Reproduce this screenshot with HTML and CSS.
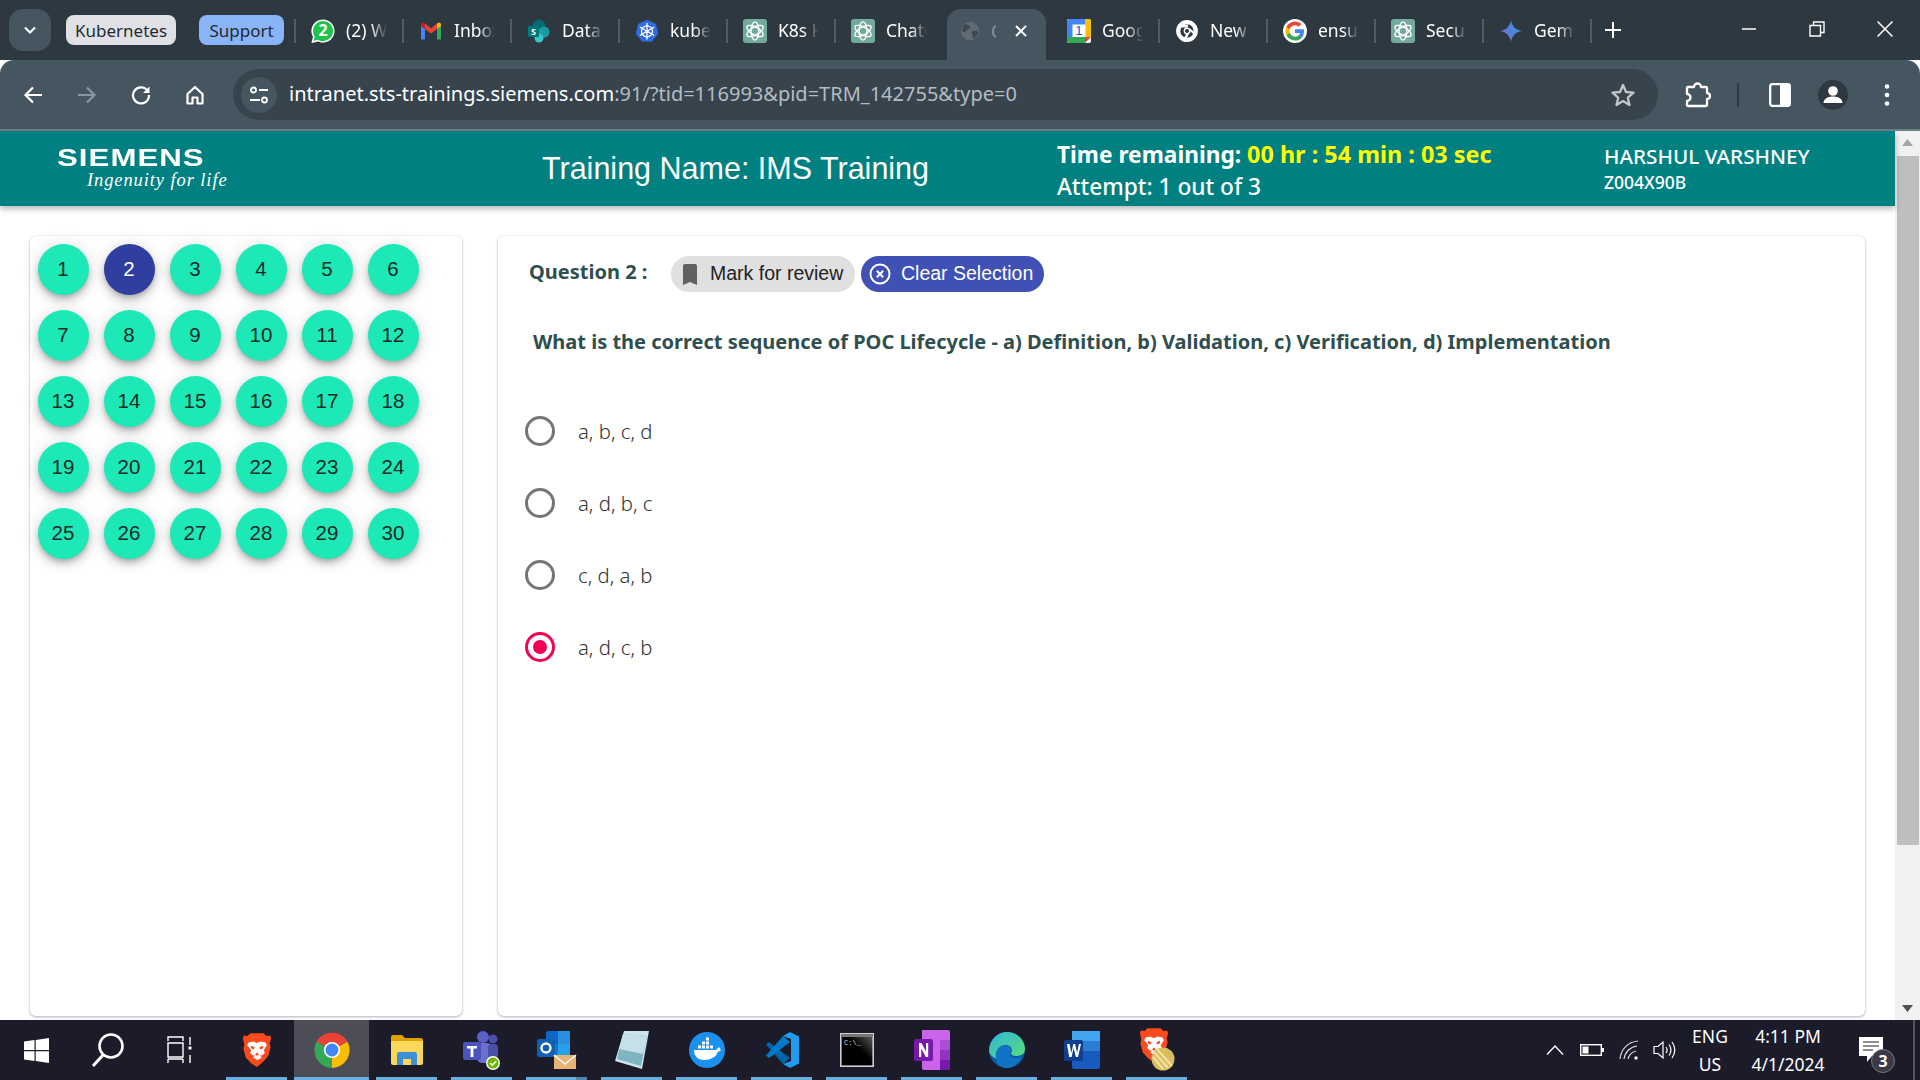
FILE: index.html
```html
<!DOCTYPE html>
<html lang="en">
<head>
<meta charset="utf-8">
<title>IMS Training</title>
<link rel="stylesheet" href="styles.css">
</head>
<body>
<svg class="defs" width="0" height="0" aria-hidden="true">
  <defs>
    <linearGradient id="gem" x1="0" y1="1" x2="1" y2="0"><stop offset="0" stop-color="#9b72cb"/><stop offset=".5" stop-color="#4f7fdc"/><stop offset="1" stop-color="#3aa0e8"/></linearGradient>
    <linearGradient id="edgeA" x1="0" y1="0" x2="1" y2="1"><stop offset="0" stop-color="#2fb7d8"/><stop offset="1" stop-color="#5bdc78"/></linearGradient>
    <linearGradient id="cmdG" x1="0" y1="1" x2="1" y2="0"><stop offset=".55" stop-color="#000"/><stop offset="1" stop-color="#666"/></linearGradient>
    <symbol id="gpt" viewBox="0 0 24 24">
      <rect width="24" height="24" rx="3" fill="#74aa9c"/>
      <g fill="none" stroke="#fff" stroke-width="1.300">
        <ellipse cx="12" cy="12" rx="3.900" ry="9.200"/>
        <ellipse cx="12" cy="12" rx="3.900" ry="9.200" transform="rotate(60 12 12)"/>
        <ellipse cx="12" cy="12" rx="3.900" ry="9.200" transform="rotate(120 12 12)"/>
      </g>
    </symbol>
    <symbol id="brave" viewBox="0 0 32 38">
      <path fill="#fb4a1c" d="M9 1h14l3 3 4-.5 1 3-1.500 5.500 1 4-2.500 9.500-6 6.500L16 37l-6-3.500L4 27 1.500 17.500l1-4.500L1 6.500l1-3 4 .5z"/>
      <path fill="#fff" d="M7 11l5-1 4 1.500 4-1.500 5 1 1.500 3-3.500 5.500 1.500 2.500-3.500 3-2-.8 2 3-4.500 2.500-4.500-2.500 2-3-2 .8-3.500-3 1.500-2.500L5.500 14z"/>
      <path fill="#fb4a1c" d="M9.500 14.500l4 1.500-1 2.500-3-1.500zM22.500 14.500l-4 1.500 1 2.500 3-1.500zM14 24l2 1.200 2-1.200-2-2.500z"/>
    </symbol>
  </defs>
</svg>

<div class="tabstrip">
  <div class="tab-search"><svg width="14" height="14" viewBox="0 0 14 14"><path d="M2 4.500l5 5 5-5" fill="none" stroke="#fff" stroke-width="2"/></svg></div>
  <div class="pill pill-grey">Kubernetes</div>
  <div class="pill pill-blue">Support</div>

  <div class="tab">
    <svg class="fav" viewBox="0 0 24 24"><path d="M12 1.200a10.800 10.800 0 0 0-9.200 16.400L1.500 23l5.500-1.400A10.800 10.800 0 1 0 12 1.200z" fill="#1fc24a" stroke="#fff" stroke-width="1.600"/><text x="12" y="17" class="wa-num">2</text></svg>
    <span class="tab-label">(2) WhatsApp</span>
  </div>
  <div class="tab">
    <svg class="fav" viewBox="0 0 24 24"><path fill="#4285f4" d="M2 20.500h4V10L2 7z"/><path fill="#34a853" d="M18 20.500h4V7l-4 3z"/><path fill="#ea4335" d="M6 10l6 4.500 6-4.500V4.500l-6 4.700-6-4.700z"/><path fill="#fbbc04" d="M18 4.500V10l4-3V5.500c0-2-2.500-2.500-4-1z"/><path fill="#c5221f" d="M2 7l4 3V4.500c-1.500-1.500-4-1-4 1z"/></svg>
    <span class="tab-label">Inbox (3)</span>
  </div>
  <div class="tab">
    <svg class="fav" viewBox="0 0 24 24"><circle cx="12" cy="7" r="6.500" fill="#036c70"/><circle cx="17" cy="13" r="5.500" fill="#1a9ba1"/><circle cx="12" cy="19" r="4.500" fill="#37c6d0"/><rect x="1" y="7" width="11" height="11" rx="1" fill="#03787c"/><text x="6.500" y="15.500" class="sp-s">S</text></svg>
    <span class="tab-label">Data Sheet</span>
  </div>
  <div class="tab">
    <svg class="fav" viewBox="0 0 24 24"><path fill="#326ce5" d="M12 .8l9 4.300 2.200 9.700-6.200 7.800H7L.8 14.800 3 5.100z"/><g fill="none" stroke="#fff" stroke-width="1.300"><circle cx="12" cy="12.300" r="5.500"/><path d="M12 4v16.500M4.800 8l14.400 8.500M19.200 8L4.800 16.500"/></g><circle cx="12" cy="12.300" r="1.600" fill="#fff"/></svg>
    <span class="tab-label">kubernetes</span>
  </div>
  <div class="tab"><svg class="fav"><use href="#gpt"/></svg><span class="tab-label">K8s Help</span></div>
  <div class="tab"><svg class="fav"><use href="#gpt"/></svg><span class="tab-label">ChatGPT</span></div>
  <div class="tab tab-active">
    <svg class="fav fav-globe" viewBox="0 0 24 24"><circle cx="12" cy="12" r="11" fill="#5f6a72"/><path fill="#3d4951" d="M6 3.500c3 1 5 1 6 3s-3 3-4 5-4 2-5 1 0-7 3-9zM15 12c3-1 6 0 7 1-.5 4-3 7-6 8-2-2 0-3-1-5s-2-3 0-4z"/></svg>
    <span class="tab-label tab-label-short">O</span>
    <svg class="tab-x" width="14" height="14" viewBox="0 0 14 14"><path d="M2 2l10 10M12 2L2 12" stroke="#fff" stroke-width="2"/></svg>
  </div>
  <div class="tab tab-after">
    <svg class="fav" viewBox="0 0 24 24"><rect width="24" height="24" rx="2" fill="#fff"/><path fill="#4285f4" d="M0 2.500A2.500 2.500 0 0 1 2.500 0H18v5.500H5.500V18H0z"/><path fill="#fbbc04" d="M18 0h3.500A2.500 2.500 0 0 1 24 2.500V18h-5.500V5.500H18z"/><path fill="#34a853" d="M0 18h18v6H2.500A2.500 2.500 0 0 1 0 21.500z"/><path fill="#ea4335" d="M18 18h6l-6 6z"/><text x="11.800" y="16" class="cal-num">1</text></svg>
    <span class="tab-label">Google Calendar</span>
  </div>
  <div class="tab">
    <svg class="fav" viewBox="0 0 24 24"><circle cx="12" cy="12" r="8.800" fill="none" stroke="#fff" stroke-width="4.200"/><path fill="#fff" d="M3 5.500h10v3H5zM14 14.500l-3.500 8.500-3-.8 4-8zM15 9.500l6 4.500-.8 3-6.200-6z"/><circle cx="12" cy="12" r="3.400" fill="#fff"/><circle cx="12" cy="12" r="2" fill="#2d3840"/></svg>
    <span class="tab-label">New Tab</span>
  </div>
  <div class="tab">
    <svg class="fav" viewBox="0 0 24 24"><circle cx="12" cy="12" r="12" fill="#fff"/><path fill="#4285f4" d="M21 12.200c0-.7-.1-1.300-.2-1.900H12v3.600h5c-.2 1.200-.9 2.200-1.900 2.900v2.400h3.100c1.800-1.700 2.800-4.100 2.800-7z"/><path fill="#34a853" d="M12 21.500c2.600 0 4.700-.9 6.300-2.300l-3.100-2.400c-.9.600-2 .9-3.200.9-2.500 0-4.600-1.700-5.300-3.900H3.500v2.500c1.600 3.200 4.800 5.200 8.500 5.200z"/><path fill="#fbbc04" d="M6.700 13.800a5.700 5.700 0 0 1 0-3.600V7.700H3.500a9.500 9.500 0 0 0 0 8.600z"/><path fill="#ea4335" d="M12 6.300c1.400 0 2.600.5 3.600 1.400l2.700-2.700A9.500 9.500 0 0 0 3.500 7.700l3.200 2.500C7.400 8 9.500 6.300 12 6.300z"/></svg>
    <span class="tab-label">ensure</span>
  </div>
  <div class="tab"><svg class="fav"><use href="#gpt"/></svg><span class="tab-label">Security</span></div>
  <div class="tab">
    <svg class="fav" viewBox="0 0 24 24"><path fill="url(#gem)" d="M12 1c.8 6 4.500 10 11 11-6.500 1-10.200 5-11 11-.8-6-4.500-10-11-11 6.500-1 10.200-5 11-11z"/></svg>
    <span class="tab-label">Gemini</span>
  </div>
  <div class="tab-end"></div>
  <svg class="new-tab" width="16" height="16" viewBox="0 0 16 16"><path d="M8 0v16M0 8h16" stroke="#fff" stroke-width="2"/></svg>
  <div class="win-controls">
    <svg width="16" height="16" viewBox="0 0 16 16"><path d="M1 8h14" stroke="#fff" stroke-width="1.500"/></svg>
    <svg width="16" height="16" viewBox="0 0 16 16"><path d="M1 4.500h10.500V15H1zM4.500 4.500V1H15v10.500h-3.500" fill="none" stroke="#fff" stroke-width="1.400"/></svg>
    <svg width="16" height="16" viewBox="0 0 16 16"><path d="M.500.500l15 15M15.500.500l-15 15" stroke="#fff" stroke-width="1.500"/></svg>
  </div>
</div>

<div class="toolbar">
  <div class="nav-icons">
    <svg width="20" height="20" viewBox="0 0 20 20"><path d="M19 10H3M10 2.500L2.500 10l7.500 7.500" fill="none" stroke="#fff" stroke-width="2.200"/></svg>
    <svg width="20" height="20" viewBox="0 0 20 20"><path d="M1 10h16M10 2.500l7.500 7.500-7.500 7.500" fill="none" stroke="#8b97a0" stroke-width="2.200"/></svg>
    <svg width="20" height="20" viewBox="0 0 20 20"><path d="M17 6.500A8 8 0 1 0 18 10" fill="none" stroke="#fff" stroke-width="2.200"/><path d="M18.500 1.500V8H12z" fill="#fff"/></svg>
    <svg width="20" height="20" viewBox="0 0 20 20"><path d="M2.500 9L10 2l7.500 7v9.500H12.500v-6h-5v6h-5z" fill="none" stroke="#fff" stroke-width="2.200" stroke-linejoin="round"/></svg>
  </div>
  <div class="omnibox">
    <div class="site-info"><svg width="20" height="18" viewBox="0 0 20 18"><circle cx="4.500" cy="4" r="2.500" fill="none" stroke="#fff" stroke-width="1.800"/><path d="M10 4h9M1 14h10" stroke="#fff" stroke-width="2"/><circle cx="15.500" cy="14" r="2.500" fill="none" stroke="#fff" stroke-width="1.800"/></svg></div>
    <div class="url"><span class="url-host">intranet.sts-trainings.siemens.com</span><span class="url-rest">:91/?tid=116993&amp;pid=TRM_142755&amp;type=0</span></div>
    <svg class="star" width="26" height="26" viewBox="0 0 26 26"><path d="M13 3l3 7 7.500.7-5.700 5 1.700 7.300-6.500-3.900L6.500 23l1.700-7.300-5.700-5L10 10z" fill="none" stroke="#c4c7c9" stroke-width="2.300" stroke-linejoin="round"/></svg>
  </div>
  <div class="tool-icons">
    <svg class="ic-ext" width="26" height="28" viewBox="0 0 26 28"><path d="M3 6h6a3.500 3.500 0 0 1 7 0h5a1 1 0 0 1 1 1v5a3 3 0 0 1 0 6v6a1 1 0 0 1-1 1H3a1 1 0 0 1-1-1v-4a3.500 3.500 0 0 0 0-7V7a1 1 0 0 1 1-1z" fill="none" stroke="#fff" stroke-width="2.300" stroke-linejoin="round"/></svg>
    <span class="tool-sep"></span>
    <svg class="ic-panel" width="22" height="24" viewBox="0 0 22 24"><rect x="1.200" y="1.200" width="19.600" height="21.600" rx="2" fill="none" stroke="#fff" stroke-width="2.300"/><rect x="11" y="1.200" width="9.800" height="21.600" fill="#fff"/></svg>
    <svg class="ic-user" width="30" height="30" viewBox="0 0 30 30"><circle cx="15" cy="15" r="15" fill="#2d3840"/><circle cx="15" cy="11" r="4.800" fill="#fff"/><path d="M5.500 23c0-4.500 5-6.500 9.500-6.500s9.500 2 9.500 6.500z" fill="#fff"/></svg>
    <svg class="ic-menu" width="6" height="24" viewBox="0 0 6 24"><circle cx="3" cy="3.500" r="2.300" fill="#fff"/><circle cx="3" cy="12" r="2.300" fill="#fff"/><circle cx="3" cy="20.500" r="2.300" fill="#fff"/></svg>
  </div>
</div>
<div class="toolbar-line"></div>

<div class="viewport">
  <main class="page">
    <header class="app-header">
      <div class="logo">
        <div class="logo-word">SIEMENS</div>
        <div class="logo-tag">Ingenuity for life</div>
      </div>
      <div class="training">Training Name: IMS Training</div>
      <div class="timer">
        <div class="timer-line"><b>Time remaining:</b> <b class="timer-val">00 hr : 54 min : 03 sec</b></div>
        <div class="attempt">Attempt: 1 out of 3</div>
      </div>
      <div class="user">
        <div class="user-name">HARSHUL VARSHNEY</div>
        <div class="user-id">Z004X90B</div>
      </div>
    </header>

    <div class="content">
      <aside class="card nav-card">
        <div class="q-grid">
          <span class="q">1</span><span class="q q-current">2</span><span class="q">3</span><span class="q">4</span><span class="q">5</span><span class="q">6</span>
          <span class="q">7</span><span class="q">8</span><span class="q">9</span><span class="q">10</span><span class="q">11</span><span class="q">12</span>
          <span class="q">13</span><span class="q">14</span><span class="q">15</span><span class="q">16</span><span class="q">17</span><span class="q">18</span>
          <span class="q">19</span><span class="q">20</span><span class="q">21</span><span class="q">22</span><span class="q">23</span><span class="q">24</span>
          <span class="q">25</span><span class="q">26</span><span class="q">27</span><span class="q">28</span><span class="q">29</span><span class="q">30</span>
        </div>
      </aside>

      <section class="card question-card">
        <div class="q-head">
          <div class="q-title">Question 2 :</div>
          <div class="chip chip-grey">
            <svg width="16" height="21" viewBox="0 0 16 21"><path d="M1 2a2 2 0 0 1 2-2h10a2 2 0 0 1 2 2v19l-7-3-7 3z" fill="#616161"/></svg>
            <span class="chip-text">Mark for review</span>
          </div>
          <div class="chip chip-indigo">
            <svg width="22" height="22" viewBox="0 0 22 22"><circle cx="11" cy="11" r="9.500" fill="none" stroke="#fff" stroke-width="2"/><path d="M7.800 7.800l6.400 6.400M14.200 7.800l-6.400 6.400" stroke="#fff" stroke-width="2"/></svg>
            <span class="chip-text">Clear Selection</span>
          </div>
        </div>
        <div class="q-text">What is the correct sequence of POC Lifecycle - a) Definition, b) Validation, c) Verification, d) Implementation</div>
        <div class="options">
          <div class="option"><span class="radio"></span><span>a, b, c, d</span></div>
          <div class="option"><span class="radio"></span><span>a, d, b, c</span></div>
          <div class="option"><span class="radio"></span><span>c, d, a, b</span></div>
          <div class="option"><span class="radio radio-on"></span><span>a, d, c, b</span></div>
        </div>
      </section>
    </div>
  </main>
  <div class="scrollbar">
    <svg class="sb-arrow" width="11" height="7" viewBox="0 0 11 7"><path d="M5.500 0L11 7H0z" fill="#a3a3a3"/></svg>
    <div class="sb-thumb"></div>
    <svg class="sb-arrow sb-down" width="11" height="7" viewBox="0 0 11 7"><path d="M5.500 7L0 0h11z" fill="#505050"/></svg>
  </div>
</div>

<footer class="taskbar">
  <div class="tb-sys tb-win"><svg width="25" height="25" viewBox="0 0 25 25"><path fill="#fff" d="M0 3.600l10.500-1.500v9.900H0zM11.700 1.900L25 0v12H11.700zM0 13.200h10.500v9.900L0 21.600zM11.700 13.200H25V25l-13.300-1.900z"/></svg></div>
  <div class="tb-sys tb-search"><svg width="34" height="36" viewBox="0 0 34 36"><circle cx="20" cy="14" r="11.500" fill="none" stroke="#fff" stroke-width="2.600"/><path d="M12 23L2 34" stroke="#fff" stroke-width="3"/></svg></div>
  <div class="tb-sys tb-view"><svg width="26" height="28" viewBox="0 0 26 28"><path d="M1 5V1h15v4M1 23v4M16 23v4M1 23h15M1 7h15v14H1z" fill="none" stroke="#fff" stroke-width="1.400"/><path d="M23 1v8M23 19v8" stroke="#fff" stroke-width="1.400"/><rect x="21.500" y="10.500" width="3" height="3" fill="#fff"/></svg></div>

  <div class="tb-item"><svg width="30" height="36"><use href="#brave"/></svg></div>
  <div class="tb-item tb-active">
    <svg width="36" height="36" viewBox="0 0 24 24"><path fill="#ea4335" d="M12 12L1.600 6.500A12 12 0 0 1 22.400 6.500z"/><path fill="#fbbc04" d="M12 12L22.400 6.500A12 12 0 0 1 12 24z"/><path fill="#34a853" d="M12 12L12 24A12 12 0 0 1 1.600 6.500z"/><circle cx="12" cy="12" r="5.400" fill="#fff"/><circle cx="12" cy="12" r="4.300" fill="#4285f4"/></svg>
  </div>
  <div class="tb-item">
    <svg width="32" height="30" viewBox="0 0 32 30"><path d="M0 2a2 2 0 0 1 2-2h9l3 3h16a2 2 0 0 1 2 2v4H0z" fill="#e0a000"/><path d="M0 6h32v22a2 2 0 0 1-2 2H2a2 2 0 0 1-2-2z" fill="#fbd75b"/><path d="M6 30V19a2 2 0 0 1 2-2h16a2 2 0 0 1 2 2v11h-6v-6h-8v6z" fill="#3c8fd4"/></svg>
  </div>
  <div class="tb-item">
    <svg width="37" height="40" viewBox="0 0 37 40"><circle cx="20" cy="7" r="6" fill="#5b5fc7"/><circle cx="30" cy="9" r="4.500" fill="#4a4fa8"/><rect x="14" y="13" width="15" height="20" rx="5" fill="#6a6fd0"/><rect x="25" y="14" width="10" height="15" rx="4" fill="#4a4fa8"/><rect x="0" y="12" width="18" height="18" rx="2" fill="#4b53bc"/><path d="M4 16h10v2.500h-3.600V27H7.600v-8.500H4z" fill="#fff"/><circle cx="30" cy="33" r="7" fill="#fff"/><circle cx="30" cy="33" r="5.600" fill="#6bb700"/><path d="M27 33l2.200 2.200 4-4" stroke="#fff" stroke-width="1.600" fill="none"/></svg>
  </div>
  <div class="tb-item tb-double">
    <svg width="40" height="38" viewBox="0 0 40 38"><rect x="9" y="0" width="24" height="26" rx="2" fill="#1066c8"/><rect x="21" y="0" width="12" height="13" fill="#2a8fe0"/><rect x="9" y="13" width="12" height="13" fill="#0f78d4"/><rect x="21" y="13" width="12" height="13" fill="#27a0ea"/><rect x="0" y="8" width="18" height="18" rx="2" fill="#0f5fb5"/><circle cx="9" cy="17" r="4.500" fill="none" stroke="#fff" stroke-width="2.400"/><rect x="17" y="24" width="22" height="15" fill="#e8b476"/><path d="M17 24l11 9 11-9" fill="none" stroke="#fff" stroke-width="1.400"/></svg>
  </div>
  <div class="tb-item">
    <svg width="34" height="38" viewBox="0 0 34 38"><path d="M9 0h25l-7 38L0 30z" fill="#cfe5ec"/><path d="M8 3l24 2-6 30L2 28z" fill="#7fb4c2"/><path d="M8 3l24 2-4 18L4 18z" fill="#c5e0e6"/></svg>
  </div>
  <div class="tb-item">
    <svg width="36" height="36" viewBox="0 0 36 36"><circle cx="18" cy="18" r="18" fill="#1c90ed"/><path fill="#fff" d="M5 18h22c1 0 1.500-2.500 3-3 1 1 1 2 2 3-1 1-2 1.500-3 1.800C27 25 22 28 15 28 9 28 5 24 5 18z"/><path fill="#fff" d="M9 13.500h3v3H9zM13 13.500h3v3h-3zM17 13.500h3v3h-3zM13 9.500h3v3h-3zM17 9.500h3v3h-3zM17 5.500h3v3h-3zM21 13.500h3v3h-3z"/></svg>
  </div>
  <div class="tb-item">
    <svg width="36" height="36" viewBox="0 0 36 36"><path fill="#0065a9" d="M2 12.500L5 10l21 16-7 6z"/><path fill="#007acc" d="M2 23.500L5 26 26 10l-7-6z"/><path fill="#1f9cf0" d="M26 0l9 4.500v27L26 36l-7-4 8-3V7L19 4z"/></svg>
  </div>
  <div class="tb-item">
    <svg width="34" height="34" viewBox="0 0 34 34"><rect x=".8" y=".8" width="32.400" height="32.400" fill="url(#cmdG)" stroke="#cfcfcf" stroke-width="1.600"/><rect x="1" y="1" width="32" height="3" fill="#777"/><text x="4" y="12" class="cmd-text">C:\_</text></svg>
  </div>
  <div class="tb-item">
    <svg width="36" height="40" viewBox="0 0 36 40"><path d="M8 0h26a2 2 0 0 1 2 2v36a2 2 0 0 1-2 2H10a2 2 0 0 1-2-2z" fill="#ca64ea"/><rect x="26" y="10" width="10" height="10" fill="#ae4bd5"/><rect x="26" y="20" width="10" height="10" fill="#9332bf"/><path d="M26 30h10v8a2 2 0 0 1-2 2h-8z" fill="#7719aa"/><rect x="0" y="9" width="19" height="22" rx="2" fill="#7719aa"/><path d="M5 27V13h2.400l4.600 8.500V13h2.200v14h-2.300L7.200 18.500V27z" fill="#fff"/></svg>
  </div>
  <div class="tb-item">
    <svg width="36" height="36" viewBox="0 0 36 36"><circle cx="18" cy="18" r="18" fill="#0c59a4"/><path d="M0 18C1 7 9 0 18 0c10 0 18 8 18 17 0 5-4 7-9 7-3 0-5-1-5-3 2-2 1-8-5-8-8 0-11 7-9 14-5-2-8-5-8-9z" fill="url(#edgeA)"/><path d="M8 30c-4-8 1-17 8-17 6 0 7 6 5 8-1 3 2 5 6 5 3 0 5-1 6-3-2 8-9 13-15 13-4 0-8-2-10-6z" fill="#1173c4"/></svg>
  </div>
  <div class="tb-item">
    <svg width="36" height="38" viewBox="0 0 36 38"><path d="M8 0h26a2 2 0 0 1 2 2v34a2 2 0 0 1-2 2H10a2 2 0 0 1-2-2z" fill="#185abd"/><rect x="8" y="0" width="28" height="10" fill="#41a5ee"/><rect x="8" y="10" width="28" height="10" fill="#2b7cd3"/><rect x="0" y="9" width="19" height="21" rx="2" fill="#103f91"/><path d="M3 13h2.500l1.800 9 2-9h1.800l2 9 1.800-9H17l-3 13h-2.200L9.600 17l-2 9H5.200z" fill="#fff"/></svg>
  </div>
  <div class="tb-item">
    <svg width="36" height="46" viewBox="0 0 36 46"><use href="#brave" width="30" height="36" x="0" y="0"/><circle cx="24" cy="32" r="11.500" fill="#d9bd5e"/><path d="M15 25l14 16M18 22l15 17M14 30l10 12" stroke="#f1e3a6" stroke-width="2"/></svg>
  </div>

  <div class="tray">
    <svg class="tray-caret" width="18" height="10" viewBox="0 0 18 10"><path d="M1 9.500L9 1l8 8.500" fill="none" stroke="#fff" stroke-width="1.300"/></svg>
    <svg class="tray-bat" width="24" height="12" viewBox="0 0 24 12"><rect x=".7" y=".7" width="20.600" height="10.600" fill="none" stroke="#fff" stroke-width="1.400"/><rect x="2.500" y="2.500" width="6" height="7" fill="#fff"/><rect x="22" y="4" width="2" height="4" fill="#fff"/></svg>
    <svg class="tray-wifi" width="20" height="20" viewBox="0 0 20 20"><g fill="none" stroke="#d8d8d8" stroke-width="1.200"><path d="M1 19C2 9 9 2 19 1"/><path d="M5 19C6 12 11 7 18 6"/><path d="M9 19c1-4 4-7 8-8"/></g><circle cx="17" cy="18" r="1.700" fill="#fff"/></svg>
    <svg class="tray-vol" width="23" height="20" viewBox="0 0 23 20"><path d="M1 6.500h4L10 2v16l-5-4.500H1z" fill="none" stroke="#fff" stroke-width="1.200"/><path d="M13 7c1.500 2 1.500 4 0 6M16 4.500c2.500 3.500 2.500 7.500 0 11M19 2c3.500 5 3.500 11 0 16" fill="none" stroke="#fff" stroke-width="1.200"/></svg>
    <div class="tray-lang"><span>ENG</span><span>US</span></div>
    <div class="tray-clock"><span>4:11 PM</span><span>4/1/2024</span></div>
    <div class="tray-note">
      <svg width="24" height="26" viewBox="0 0 24 26"><path d="M0 0h24v19H13l-5 6v-6H0z" fill="#fff"/><path d="M4 5h16M4 9h16M4 13h10" stroke="#1b1b2a" stroke-width="1.200"/></svg>
      <span class="note-badge">3</span>
    </div>
    <div class="show-desktop"></div>
  </div>
</footer>
</body>
</html>
```
FILE: styles.css
```css
* { box-sizing: border-box; }
html, body { margin: 0; height: 100%; }
body {
  width: 1920px;
  height: 1080px;
  overflow: hidden;
  display: flex;
  flex-direction: column;
  background: #fff;
  font-family: "Noto Sans", sans-serif;
}
.defs { display: block; width: 0; height: 0; flex: none; }

/* Tab strip */
.tabstrip {
  height: 60px;
  flex: none;
  display: flex;
  background: #2d3840;
  padding-left: 9px;
  align-items: center;
  color: #fff;
}
.tab-search {
  width: 42px;
  height: 42px;
  border-radius: 14px;
  background: #455661;
  display: flex;
  align-items: center;
  justify-content: center;
}
.pill {
  height: 30px;
  border-radius: 8px;
  color: #1f2a30;
  font-size: 17px;
  display: flex;
  align-items: center;
  justify-content: center;
}
.pill-grey { width: 110px; margin-left: 15px; background: #dfe1e5; }
.pill-blue { width: 85px; margin-left: 23px; margin-right: 10px; background: #8ab4f8; }
.tab {
  width: 108px;
  height: 60px;
  flex: none;
  display: flex;
  align-items: center;
  padding-left: 17px;
  position: relative;
  font-size: 17.5px;
  color: #fff;
}
.tab::before {
  content: "";
  width: 2px;
  height: 24px;
  background: #4d5e69;
  position: absolute;
  left: 0;
  top: 19px;
}
.fav { width: 24px; height: 24px; flex: none; margin-top: 1px; }
.wa-num { font: 700 16px "Noto Sans", sans-serif; fill: #fff; text-anchor: middle; }
.sp-s { font: 700 9px "Noto Sans", sans-serif; fill: #fff; text-anchor: middle; }
.cal-num { font: 400 13px "Liberation Sans", sans-serif; fill: #1a56c4; text-anchor: middle; }
.cmd-text { font: 400 7px "Liberation Mono", monospace; fill: #ddd; }
.tab-label {
  margin-left: 11px;
  width: 41px;
  white-space: nowrap;
  overflow: hidden;
  -webkit-mask-image: linear-gradient(90deg, #000 60%, transparent);
  mask-image: linear-gradient(90deg, #000 60%, transparent);
}
.tab-active {
  background: #455661;
  height: 51px;
  margin-top: 9px;
  width: 99px;
  margin-left: 5px;
  margin-right: 4px;
  padding-left: 13px;
  padding-bottom: 8px;
  border-radius: 14px 14px 0 0;
}
.tab-active::before { display: none; }
.fav-globe { width: 20px; height: 20px; }
.tab-label-short { width: 5px; margin-left: 11px; color: #8b97a0; -webkit-mask-image: none; mask-image: none; }
.tab-x { margin-left: 18px; }
.tab-after::before { display: none; }
.tab-end { width: 2px; height: 24px; background: #4d5e69; flex: none; margin-top: 2px; }
.new-tab { margin-left: 13px; flex: none; }
.win-controls {
  display: flex;
  align-items: center;
  margin-left: 120px;
  gap: 52px;
  padding-bottom: 2px;
}

/* Toolbar */
.toolbar {
  height: 69px;
  flex: none;
  background: #455661;
  border-radius: 14px 14px 0 0;
  display: flex;
  align-items: center;
  padding: 0 24px 0 23px;
}
.toolbar-line { height: 2px; flex: none; background: #6f7f89; }
.nav-icons { display: flex; align-items: center; gap: 34px; }
.omnibox {
  width: 1425px;
  margin-left: 28px;
  height: 51px;
  border-radius: 26px;
  background: #37444d;
  display: flex;
  align-items: center;
  padding: 0 22px 0 8px;
}
.site-info {
  width: 36px;
  height: 36px;
  border-radius: 50%;
  background: #455661;
  display: flex;
  align-items: center;
  justify-content: center;
  flex: none;
}
.url { margin-left: 12px; flex: 1; font-size: 20px; line-height: 28px; padding-bottom: 2px; white-space: nowrap; }
.url-host { color: #fff; }
.url-rest { color: #b4bcc2; }
.star { flex: none; }
.tool-icons { display: flex; align-items: center; margin-left: 27px; flex: 1; }
.tool-sep { width: 2px; height: 24px; background: #2d3840; margin-left: 26px; }
.ic-panel { margin-left: 30px; }
.ic-user { margin-left: 27px; }
.ic-menu { margin-left: 36px; }

/* Page */
.viewport { flex: 1; display: flex; min-height: 0; }
.page { flex: 1; min-width: 0; display: flex; flex-direction: column; }
.app-header {
  height: 75px;
  flex: none;
  background: #008080;
  color: #fff;
  display: flex;
  align-items: center;
  padding-left: 57px;
  box-shadow: 0 3px 6px rgba(0,0,0,.28);
  position: relative;
}
.logo { width: 485px; }
.logo-word {
  font: 700 24px/22px "Liberation Sans", sans-serif;
  letter-spacing: .8px;
  transform: scaleX(1.3);
  transform-origin: left;
}
.logo-tag {
  font: italic 400 18.500px/20px "Liberation Serif", serif;
  margin: 1px 0 0 30px;
  letter-spacing: .9px;
}
.training { width: 515px; padding-bottom: 2px; font: 400 30.500px/40px "Liberation Sans", sans-serif; }
.timer { width: 547px; padding-top: 4px; font-size: 22.7px; line-height: 32px; }
.timer-line b { font-weight: 700; }
.timer-val { color: #ff0; font-size: 23.4px; }
.attempt { font-weight: 500; }
.user { flex: 1; }
.user-name { font-size: 20.7px; line-height: 27px; font-weight: 500; }
.user-id { font-size: 17.5px; line-height: 24px; font-weight: 500; }

.content {
  flex: 1;
  min-height: 0;
  display: flex;
  gap: 36px;
  padding: 30px 30px 4px;
}
.card {
  background: #fff;
  border-radius: 6px;
  box-shadow: 0 1px 3px rgba(0,0,0,.3), 0 0 2px rgba(0,0,0,.06);
}
.nav-card { width: 432px; flex: none; padding: 8px; }
.q-grid { display: grid; grid-template-columns: repeat(6, 51px); grid-auto-rows: 51px; gap: 15px; }
.q {
  border-radius: 50%;
  background: #1de9b6;
  color: #1a2a26;
  font: 400 20.500px "Liberation Sans", sans-serif;
  display: flex;
  align-items: center;
  justify-content: center;
  padding: 0 1px 2px 0;
  box-shadow: 0 3px 5px -1px rgba(0,0,0,.2), 0 6px 10px 0 rgba(0,0,0,.14), 0 1px 18px 0 rgba(0,0,0,.12);
}
.q-current { background: #303f9f; color: #fff; }

.question-card { flex: 1; padding: 20px 0 0 27px; }
.q-head { display: flex; align-items: center; margin-left: 4px; height: 36px; }
.q-title { width: 142px; font-size: 20px; font-weight: 700; color: #2f4f4f; margin-top: -6px; }
.chip {
  height: 36px;
  border-radius: 18px;
  display: flex;
  align-items: center;
  font: 400 19.500px "Liberation Sans", sans-serif;
}
.chip-text { padding-bottom: 2px; }
.chip-grey { width: 184px; background: #e0e0e0; color: #222; padding-left: 11px; gap: 12px; }
.chip-indigo { width: 183px; margin-left: 6px; background: #3f51b5; color: #fff; padding-left: 8px; gap: 10px; }
.q-text {
  margin: 35px 0 0 8px;
  font-size: 20px;
  line-height: 30px;
  font-weight: 700;
  color: #2f4f4f;
  white-space: nowrap;
}
.options { margin-top: 38px; }
.option {
  height: 72px;
  display: flex;
  align-items: center;
  gap: 23px;
  font-size: 20.3px;
  font-weight: 300;
  color: #333;
}
.radio {
  width: 30px;
  height: 30px;
  border-radius: 50%;
  border: 3px solid #757575;
  flex: none;
  display: flex;
  align-items: center;
  justify-content: center;
}
.radio-on { border-color: #f50057; }
.radio-on::after { content: ""; width: 14px; height: 14px; border-radius: 50%; background: #f50057; }

.scrollbar {
  width: 25px;
  flex: none;
  background: #f1f1f1;
  display: flex;
  flex-direction: column;
  align-items: center;
  padding-top: 8px;
  padding-bottom: 8px;
}
.sb-thumb { width: 22px; height: 689px; background: #bebebe; margin-top: 10px; }
.sb-arrow { flex: none; }
.sb-down { margin-top: auto; }

/* Taskbar */
.taskbar {
  height: 60px;
  flex: none;
  background: #1b1b2a;
  display: flex;
  align-items: center;
  color: #fff;
}
.tb-sys { height: 60px; display: flex; align-items: center; justify-content: center; flex: none; }
.tb-win { width: 72px; }
.tb-search { width: 71px; }
.tb-view { width: 74px; margin-right: 2px; }
.tb-item {
  width: 75px;
  height: 60px;
  flex: none;
  display: flex;
  align-items: center;
  justify-content: center;
  position: relative;
}
.tb-item::after {
  content: "";
  position: absolute;
  left: 7px;
  right: 7px;
  bottom: 0;
  height: 3px;
  background: #6aaedf;
}
.tb-active { background: #4d4d58; }
.tb-active::after { left: 0; right: 0; }
.tb-double::after { background: linear-gradient(90deg, #6aaedf 82%, #4f86ad 82%); }
.tray { margin-left: auto; display: flex; align-items: center; height: 60px; }
.tray-bat { margin-left: 16px; }
.tray-wifi { margin-left: 15px; }
.tray-vol { margin-left: 14px; }
.tray-lang, .tray-clock {
  display: flex;
  flex-direction: column;
  align-items: center;
  font-size: 17.5px;
  line-height: 28px;
}
.tray-lang { width: 44px; margin-left: 12px; }
.tray-clock { width: 88px; margin-left: 12px; }
.tray-note { position: relative; margin-left: 27px; width: 24px; height: 26px; margin-right: 30px; display: flex; }
.note-badge {
  position: absolute;
  left: 12px;
  top: 12px;
  width: 24px;
  height: 24px;
  border-radius: 50%;
  background: #3a3a46;
  border: 1.500px solid #777;
  font-size: 16px;
  font-weight: 700;
  display: flex;
  align-items: center;
  justify-content: center;
  color: #fff;
}
.show-desktop { width: 2px; height: 60px; background: #555; margin-right: 5px; }
```
